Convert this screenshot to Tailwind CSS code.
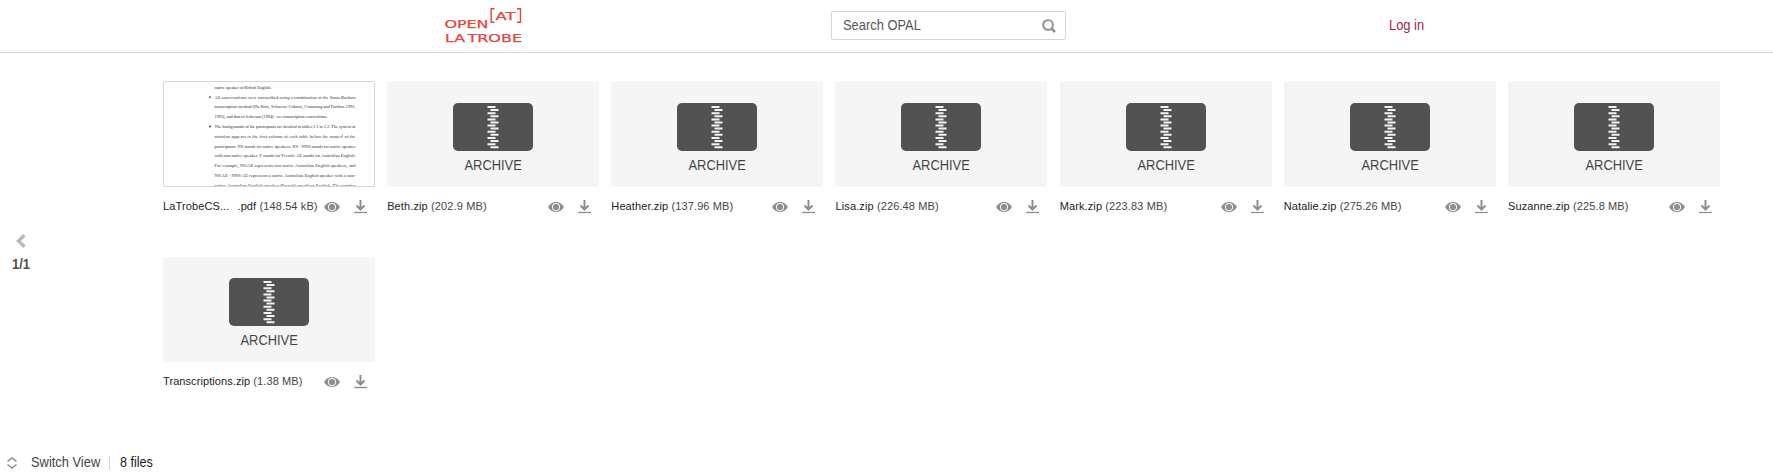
<!DOCTYPE html>
<html lang="en">
<head>
<meta charset="utf-8">
<title>OPAL files</title>
<script src="https://cdn.jsdelivr.net/npm/@tailwindcss/browser@4"></script>
</head>
<body class="h-[473px] overflow-hidden bg-white font-['Liberation_Sans',Arial,sans-serif] text-[#454545] flex flex-col">
<svg class="hidden">
  <symbol id="eye" viewBox="0 0 16 12"><path fill="#8e8e8e" fill-rule="evenodd" d="M0 6C2 2.700 4.800 1 8 1s6 1.700 8 5c-2 3.300-4.800 5-8 5S2 9.300 0 6Zm8-4a4 4 0 1 0 0 8 4 4 0 0 0 0-8Z"/><circle cx="8" cy="6" r="3.100" fill="#8e8e8e"/></symbol>
  <symbol id="down" viewBox="0 0 13 14"><path d="M6.500 0v9M2.500 5.500l4 4 4-4" fill="none" stroke="#8e8e8e" stroke-width="2"/><path d="M0 12.500h13" stroke="#8e8e8e" stroke-width="1.300"/></symbol>
  <symbol id="zip" viewBox="0 0 80 48"><rect width="80" height="48" rx="5" fill="#525252"/>
    <path d="M34.500 4h8M34.500 10.200h8M34.500 16.400h8M34.500 22.600h8M34.500 28.800h8M34.500 35h8M34.500 41.200h8M37.500 7h8M37.500 13.200h8M37.500 19.400h8M37.500 25.600h8M37.500 31.800h8M37.500 38h8M37.500 44.200h8" stroke="#f3f3f3" stroke-width="2"/></symbol>
</svg>
<header class="h-[53px] shrink-0 border-b border-[#d9d9d9] flex items-start">
  <svg class="ml-[440px] w-[90px] h-[50px] shrink-0 font-['DejaVu_Sans',sans-serif]" viewBox="440 0 90 50" fill="#e2453e" stroke="#e2453e" stroke-width=".25" font-size="11">
    <text x="444.500" y="27.700" textLength="44" lengthAdjust="spacingAndGlyphs">OPEN</text>
    <text x="495.500" y="19.500" textLength="20" lengthAdjust="spacingAndGlyphs">AT</text>
    <path d="M494.500 8.700h-3.300v13.600h3.300M517 8.700h3.500v13.600H517" fill="none" stroke-width="1.400"/>
    <text x="445" y="41.500" textLength="20" lengthAdjust="spacingAndGlyphs">LA</text>
    <text x="467.500" y="41.500" textLength="54.500" lengthAdjust="spacingAndGlyphs">TROBE</text>
  </svg>
  <div class="ml-[301px] mt-[11px] w-[235px] h-[29px] shrink-0 rounded-[2px] border border-[#d5d5d5] flex items-center pl-[11px] pr-[9px] justify-between">
    <span class="text-[14px] leading-4 mb-[2px] origin-left scale-x-[.92] text-[#555]">Search OPAL</span>
    <svg class="w-[14px] h-[14px]" viewBox="0 0 14 14" fill="none" stroke="#8e8e8e"><circle cx="6" cy="6" r="4.900" stroke-width="1.900"/><path d="M9.500 9.500l3.500 3.500" stroke-width="2.500"/></svg>
  </div>
  <a class="ml-[323px] mt-[17px] text-[14px] leading-4 origin-left scale-x-[.92] whitespace-nowrap text-[#a8184f]">Log in</a>
</header>
<main class="flex grow">
  <nav class="w-[163px] shrink-0 pt-[181px] pl-[12px]">
    <svg class="ml-[4px] w-[10px] h-[14px]" viewBox="0 0 10 14"><path d="M8.500 1.300L2.500 7l6 5.700" fill="none" stroke="#b8b8b8" stroke-width="3.400"/></svg>
    <div class="mt-[8px] text-[14px] leading-4 font-bold origin-left scale-x-[.92] w-5 text-[#505050]">1/1</div>
  </nav>
  <section id="files" class="pt-[28px] grid grid-cols-[repeat(7,212px)] auto-rows-[175px] gap-x-[12.160px] content-start"></section>
</main>
<footer class="h-[22px] shrink-0 flex items-start pl-[7px] text-[14px] leading-4">
  <svg class="mt-[6px] w-[10px] h-[12px]" viewBox="0 0 10 12" fill="none" stroke="#8e8e8e" stroke-width="1.400"><path d="M.5 4.500L5 1l4.500 3.500M.5 7.500L5 11l4.500-3.500"/></svg>
  <span class="ml-[13.500px] mt-[3px] w-[78.500px] origin-left scale-x-[.92] whitespace-nowrap">Switch View</span>
  <span class="mt-[5px] w-px h-[14px] bg-[#d5d5d5]"></span>
  <span class="ml-[10px] mt-[3px] origin-left scale-x-[.9] text-[#222]">8 files</span>
</footer>
<script>
const files = [['LaTrobeCS...','148.54 kB'],['Beth.zip','202.9 MB'],['Heather.zip','137.96 MB'],['Lisa.zip','226.48 MB'],['Mark.zip','223.83 MB'],['Natalie.zip','275.26 MB'],['Suzanne.zip','225.8 MB'],['Transcriptions.zip','1.38 MB']];
const lines = [
 ['native speaker of British English.',57],
 ['All conversations were transcribed using a combination of the Santa Barbara',141,1],
 ['transcription method (Du Bois, Schuetze-Coburn, Cumming and Paolino 1992,',141],
 ['1993), and that of Jefferson (1994) - see transcription conventions.',113],
 ['The backgrounds of the participants are detailed in tables 2.1 to 2.2. The system of',141,1],
 ['notation appears in the first column of each table below the names¹  of the',141],
 ['participants: NS stands for native speakers; NS - NNS stands for native speaker',141],
 ['with non-native speaker; F stands for French; AE stands for Australian English.',141],
 ['For example, NS/AE represents two native Australian English speakers, and',141],
 ['NS/AE - NNS/AE represents a native Australian English speaker with a non-',141],
 ['native Australian English speaker (French) speaking English. The number',141]];
const doc = `<svg class="block w-full h-full font-['Liberation_Serif',serif]" viewBox="1 1 210 104" font-size="4.5" fill="#333">` +
 lines.map((l,i)=>{const y=7.8+i*9.8;return (l[2]?`<circle cx="47" cy="${y-1.500}" r=".9"/>`:'')+`<text x="51.500" y="${y}" textLength="${l[1]}">${l[0]}</text>`}).join('') + '</svg>';
const archive = '<svg class="w-[80px] h-[48px]"><use href="#zip"/></svg><span class="mt-[5px] text-[14px] leading-[18px] scale-x-[.92]">ARCHIVE</span>';
document.getElementById('files').innerHTML = files.map(([n,s],i)=>`<article>
 <div class="${i===0?'h-[106px] rounded-[2px] border border-[#d5d5d5] overflow-hidden':i===7?'h-[105px] mt-px pt-[21px] rounded-[2px] bg-[#f5f5f5] flex flex-col items-center':'h-[106px] pt-[22px] rounded-[2px] bg-[#f5f5f5] flex flex-col items-center'}">${i===0?doc:archive}</div>
 <div class="mt-[11px] flex items-center h-[16px] text-[11px] leading-[15px] whitespace-pre ${i===7?'tracking-[.08px]':'tracking-[.12px]'}"><span class="text-[#222]">${n}</span>${i===0?'<span class="ml-[8px] text-[#222]">.pdf</span>':''}<span> (${s})</span>
 <svg class="ml-auto mt-px w-[16px] h-[12px] shrink-0"><use href="#eye"/></svg><svg class="ml-[14px] mr-[8px] mt-[2px] w-[13px] h-[14px] shrink-0"><use href="#down"/></svg></div></article>`).join('');
</script>
</body>
</html>
